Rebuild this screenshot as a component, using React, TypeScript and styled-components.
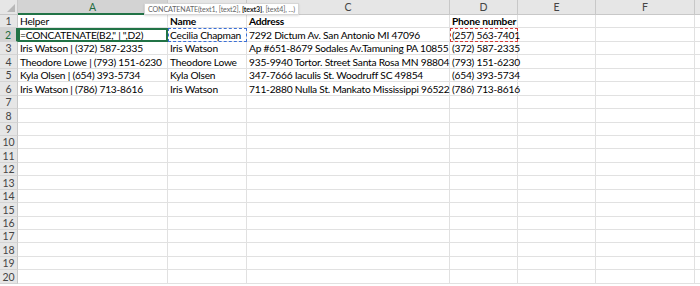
import React from "react";
import styled, { createGlobalStyle } from "styled-components";

const GlobalStyle = createGlobalStyle`
  html, body {
    margin: 0;
    padding: 0;
    background: #ffffff;
  }
  body {
    font-family: Lato, "Open Sans", sans-serif;
    overflow: hidden;
  }
`;

const COLS = [
  { name: "A", width: 150 },
  { name: "B", width: 79 },
  { name: "C", width: 203 },
  { name: "D", width: 68 },
  { name: "E", width: 78 },
  { name: "F", width: 99 },
  { name: "G", width: 40 },
];

const ROW_H = 13.45;

const Sheet = styled.div`
  display: grid;
  grid-template-columns: 18px ${COLS.map((c) => c.width + "px").join(" ")};
  grid-template-rows: 15px repeat(20, ${ROW_H}px);
  width: 700px;
  height: 286px;
  overflow: hidden;
  position: relative;
`;

const Corner = styled.div`
  background: #e6e6e6;
  border-right: 1px solid #c8c8c8;
  border-bottom: 1px solid #c8c8c8;
  position: relative;
  &::after {
    content: "";
    position: absolute;
    right: 2px;
    bottom: 2px;
    border-left: 8px solid transparent;
    border-bottom: 8px solid #b8b8b8;
  }
`;

const ColHead = styled.div<{ $active?: boolean }>`
  background: ${(p) => (p.$active ? "#d3d3d3" : "#e6e6e6")};
  border-right: 1px solid #c8c8c8;
  border-bottom: ${(p) => (p.$active ? "2px solid #217346" : "1px solid #c8c8c8")};
  color: ${(p) => (p.$active ? "#1e6b41" : "#444444")};
  font-size: 10.5px;
  display: flex;
  align-items: center;
  justify-content: center;
  box-sizing: border-box;
`;

const RowHead = styled.div<{ $active?: boolean }>`
  background: ${(p) => (p.$active ? "#d3d3d3" : "#e6e6e6")};
  border-right: ${(p) => (p.$active ? "2px solid #217346" : "1px solid #c8c8c8")};
  border-bottom: 1px solid #d4d4d4;
  color: ${(p) => (p.$active ? "#1e6b41" : "#444444")};
  font-size: 10.5px;
  display: flex;
  align-items: flex-end;
  justify-content: center;
  box-sizing: border-box;
  line-height: 12px;
`;

const Cell = styled.div<{ $bold?: boolean; $mark?: "active" | "blue" | "red" }>`
  border-right: 1px solid #e1e1e1;
  border-bottom: 1px solid #e1e1e1;
  box-sizing: border-box;
  font-size: 10.2px;
  letter-spacing: -0.22px;
  line-height: 12px;
  color: #000000;
  font-weight: ${(p) => (p.$bold ? 700 : 400)};
  padding: 0 2px;
  white-space: nowrap;
  overflow: visible;
  display: flex;
  align-items: flex-end;
  position: relative;
  ${(p) =>
    p.$mark === "active" &&
    `outline: 2px solid #217346; outline-offset: -2px; z-index: 2;`}
  ${(p) =>
    p.$mark === "blue" &&
    `outline: 1px dashed #3b6fd6; outline-offset: -1px; z-index: 2;`}
  ${(p) =>
    p.$mark === "red" &&
    `outline: 1px dashed #d63b3b; outline-offset: -1px; z-index: 2;`}
`;

const Tip = styled.div`
  position: absolute;
  left: 144px;
  top: 3px;
  height: 12px;
  padding: 0 3px;
  background: #ffffff;
  border: 1px solid #d6d6d6;
  box-shadow: 0 1px 2px rgba(0, 0, 0, 0.12);
  font-size: 7.1px;
  letter-spacing: -0.1px;
  color: #666666;
  display: flex;
  align-items: center;
  white-space: pre;
  z-index: 5;
  box-sizing: border-box;
  b {
    color: #222222;
    font-weight: 700;
  }
`;

type Row = { cells: string[]; bold?: boolean };

const rows: Row[] = [
  { cells: ["Helper", "Name", "Address", "Phone number"], bold: true },
  { cells: ['=CONCATENATE(B2," | ",D2)', "Cecilia Chapman", "7292 Dictum Av. San Antonio MI 47096", "(257) 563-7401"] },
  { cells: ["Iris Watson | (372) 587-2335", "Iris Watson", "Ap #651-8679 Sodales Av.Tamuning PA 10855", "(372) 587-2335"] },
  { cells: ["Theodore Lowe | (793) 151-6230", "Theodore Lowe", "935-9940 Tortor. Street Santa Rosa MN 98804", "(793) 151-6230"] },
  { cells: ["Kyla Olsen | (654) 393-5734", "Kyla Olsen", "347-7666 Iaculis St. Woodruff SC 49854", "(654) 393-5734"] },
  { cells: ["Iris Watson | (786) 713-8616", "Iris Watson", "711-2880 Nulla St. Mankato Mississippi 96522", "(786) 713-8616"] },
];

function markFor(r: number, c: number) {
  if (r !== 1) return undefined;
  if (c === 0) return "active" as const;
  if (c === 1) return "blue" as const;
  if (c === 3) return "red" as const;
  return undefined;
}

// B and G headings are hidden under the tooltip / cut off at the edge
const headLabel = (name: string) => (name === "B" || name === "G" ? "" : name);

export default function App() {
  return (
    <>
      <GlobalStyle />
      <Sheet>
        <Corner />
        {COLS.map((c) => (
          <ColHead key={c.name} $active={c.name === "A"}>
            {headLabel(c.name)}
          </ColHead>
        ))}
        {Array.from({ length: 20 }).map((_, r) => (
          <React.Fragment key={r}>
            <RowHead $active={r === 1}>{r + 1}</RowHead>
            {COLS.map((c, ci) => {
              const text = rows[r]?.cells[ci] ?? "";
              const bold = rows[r]?.bold && ci > 0;
              return (
                <Cell key={c.name} $bold={bold} $mark={markFor(r, ci)}>
                  {text}
                </Cell>
              );
            })}
          </React.Fragment>
        ))}
        <Tip>
          CONCATENATE(text1, [text2], <b>[text3]</b>, [text4], ...)
        </Tip>
      </Sheet>
    </>
  );
}
